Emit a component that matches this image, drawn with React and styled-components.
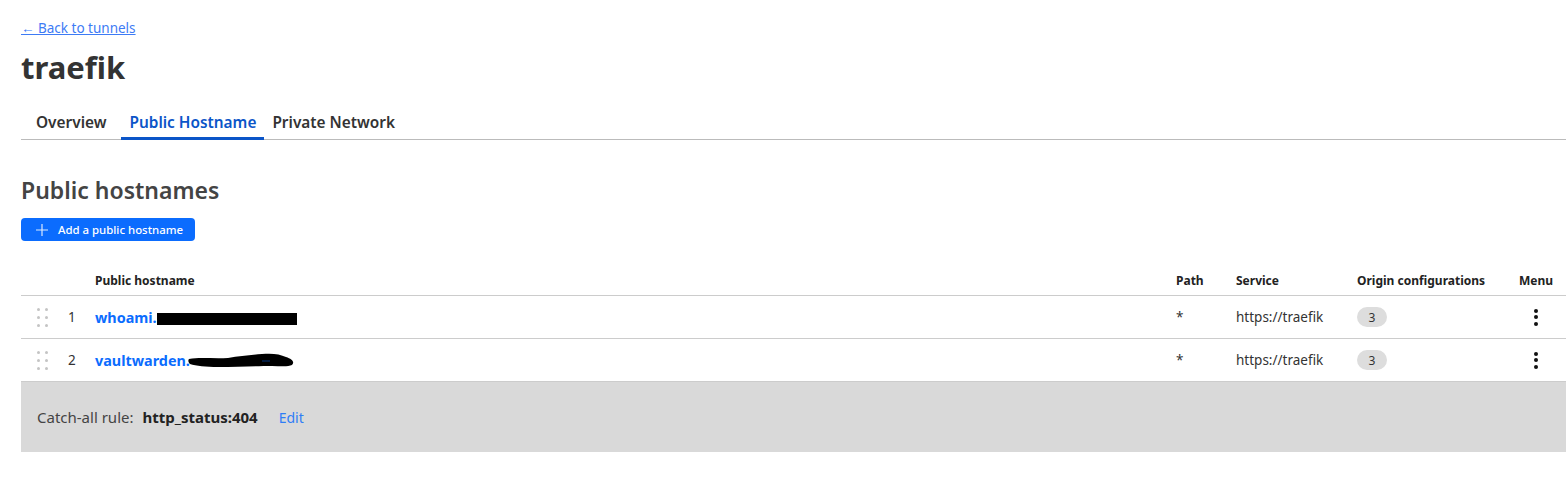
import React from 'react'
import styled, { createGlobalStyle } from 'styled-components'

const GlobalStyle = createGlobalStyle`
    html, body {
        margin: 0;
        padding: 0;
        background: #ffffff;
        font-family: "Noto Sans", "Open Sans", sans-serif;
        color: #333;
    }
`

const rows = [
    { id: 1, host: 'whoami.', redact: 'bar', path: '*', service: 'https://traefik', origins: 3 },
    { id: 2, host: 'vaultwarden.', redact: 'scribble', path: '*', service: 'https://traefik', origins: 3 },
]

function DragHandle() {
    return (
        <Handle>
            {[0, 1, 2, 3, 4, 5].map(i => <HandleDot key={i} />)}
        </Handle>
    )
}

function Redaction({ kind }) {
    if (kind === 'bar') {
        return <BlackBar />
    }
    return (
        <Scribble width="108" height="20" viewBox="0 0 108 20">
            <path
                d="M1 9 C 12 7, 26 9, 40 8 C 52 6, 62 5, 74 4 C 84 3, 92 4, 98 7 C 104 9, 107 12, 104 15 C 100 17, 92 16, 84 16 C 70 16, 50 17, 30 17 C 18 17, 8 16, 2 14 C 0 12, 0 10, 1 9 Z"
                fill="#000"
            />
            <path d="M74 11 H 82" stroke="#0b6cfe" strokeWidth="1" opacity="0.5" />
        </Scribble>
    )
}

export default function App() {
    return (
        <>
            <GlobalStyle />
            <Page>
                <BackRow>
                    <BackLink href="#">← Back to tunnels</BackLink>
                </BackRow>
                <Title>traefik</Title>
                <Tabs>
                    <Tab first>Overview</Tab>
                    <Tab active>Public Hostname</Tab>
                    <Tab>Private Network</Tab>
                </Tabs>

                <SectionTitle>Public hostnames</SectionTitle>
                <AddButton>
                    <svg width="12" height="12" viewBox="0 0 12 12">
                        <path d="M6 0 V12 M0 6 H12" stroke="#fff" strokeWidth="1.2" opacity="0.85" />
                    </svg>
                    Add a public hostname
                </AddButton>

                <Table>
                    <HeadRow>
                        <Cell />
                        <Cell />
                        <HeadCell>Public hostname</HeadCell>
                        <HeadCell>Path</HeadCell>
                        <HeadCell>Service</HeadCell>
                        <HeadCell>Origin configurations</HeadCell>
                        <HeadCell>Menu</HeadCell>
                    </HeadRow>
                    {rows.map(row => (
                        <Row key={row.id}>
                            <Cell><DragHandle /></Cell>
                            <NumCell>{row.id}</NumCell>
                            <Cell>
                                <HostLink href="#">
                                    {row.host}
                                    <Redaction kind={row.redact} />
                                </HostLink>
                            </Cell>
                            <Cell>{row.path}</Cell>
                            <Cell>{row.service}</Cell>
                            <Cell><Badge>{row.origins}</Badge></Cell>
                            <MenuCell>
                                <Kebab>
                                    <KebabDot /><KebabDot /><KebabDot />
                                </Kebab>
                            </MenuCell>
                        </Row>
                    ))}
                </Table>

                <CatchAll>
                    <CatchLabel>Catch-all rule:</CatchLabel>
                    <CatchValue>http_status:404</CatchValue>
                    <EditLink href="#">Edit</EditLink>
                </CatchAll>
            </Page>
        </>
    )
}

const Page = styled.div`
    padding: 18px 0 0 21px;
`

const BackRow = styled.div`
    font-size: 13.5px;
    line-height: 20px;
`

const BackLink = styled.a`
    color: #3d7bf5;
    text-decoration: underline;
`

const Title = styled.h1`
    margin: 8px 0 0;
    font-size: 31px;
    font-weight: 700;
    color: #333;
    line-height: 42px;
`

const Tabs = styled.div`
    display: flex;
    margin-top: 24px;
    border-bottom: 1px solid #bbbbbb;
`

const Tab = styled.div`
    font-size: 15.4px;
    font-weight: 600;
    line-height: 22px;
    padding: ${p => (p.first ? '0 15px' : '0 8px')};
    padding-bottom: 3px;
    margin-bottom: -1px;
    color: ${p => (p.active ? '#0b55c8' : '#333')};
    border-bottom: 3px solid ${p => (p.active ? '#0b55c8' : 'transparent')};
`

const SectionTitle = styled.h2`
    margin: 35px 0 0;
    font-size: 23px;
    font-weight: 600;
    color: #444;
    line-height: 30px;
`

const AddButton = styled.button`
    margin-top: 13px;
    display: inline-flex;
    align-items: center;
    gap: 10px;
    height: 23px;
    padding: 0 12px 0 15px;
    background: #0b6cfe;
    color: #fff;
    border: none;
    border-radius: 4px;
    font-family: inherit;
    font-size: 11.4px;
    font-weight: 500;
`

const Table = styled.div`
    margin-top: 25px;
    display: grid;
    grid-template-columns: 40px 34px 1fr 60px 121px 162px 47px;
`

const Row = styled.div`
    display: contents;
    & > * {
        height: 43px;
        border-top: 1px solid #cccccc;
        box-sizing: border-box;
    }
`

const HeadRow = styled.div`
    display: contents;
    & > * {
        height: 29px;
    }
`

const Cell = styled.div`
    display: flex;
    align-items: center;
    font-size: 13.5px;
    color: #333;
`

const HeadCell = styled(Cell)`
    font-size: 12px;
    font-weight: 700;
    color: #222;
`

const NumCell = styled(Cell)`
    padding-left: 7px;
`

const MenuCell = styled(Cell)`
    justify-content: center;
    padding-right: 13px;
`

const Handle = styled.div`
    margin-left: 16px;
    display: grid;
    grid-template-columns: 3px 3px;
    column-gap: 5px;
    row-gap: 5px;
`

const HandleDot = styled.span`
    width: 3px;
    height: 3px;
    border-radius: 50%;
    background: #c4c4c4;
`

const HostLink = styled.a`
    display: inline-flex;
    align-items: center;
    font-size: 14.4px;
    font-weight: 700;
    color: #0b6cfe;
    text-decoration: none;
`

const BlackBar = styled.span`
    display: inline-block;
    width: 140px;
    height: 12px;
    margin-top: 3px;
    background: #000;
`

const Scribble = styled.svg`
    display: inline-block;
    margin-left: -2px;
    margin-top: 0px;
`

const Badge = styled.span`
    display: inline-flex;
    align-items: center;
    justify-content: center;
    width: 30px;
    height: 20px;
    border-radius: 10px;
    background: #dddddd;
    font-size: 12px;
    color: #333;
`

const Kebab = styled.div`
    display: flex;
    flex-direction: column;
    gap: 2.5px;
`

const KebabDot = styled.span`
    width: 4px;
    height: 4px;
    border-radius: 50%;
    background: #111;
`

const CatchAll = styled.div`
    display: flex;
    align-items: center;
    height: 70px;
    padding-left: 16px;
    background: #d9d9d9;
    border-top: 1px solid #cccccc;
    font-size: 15px;
`

const CatchLabel = styled.span`
    color: #444;
`

const CatchValue = styled.span`
    margin-left: 9px;
    font-weight: 700;
    color: #222;
`

const EditLink = styled.a`
    margin-left: 21px;
    color: #2f7df6;
    font-size: 14px;
    text-decoration: none;
`
